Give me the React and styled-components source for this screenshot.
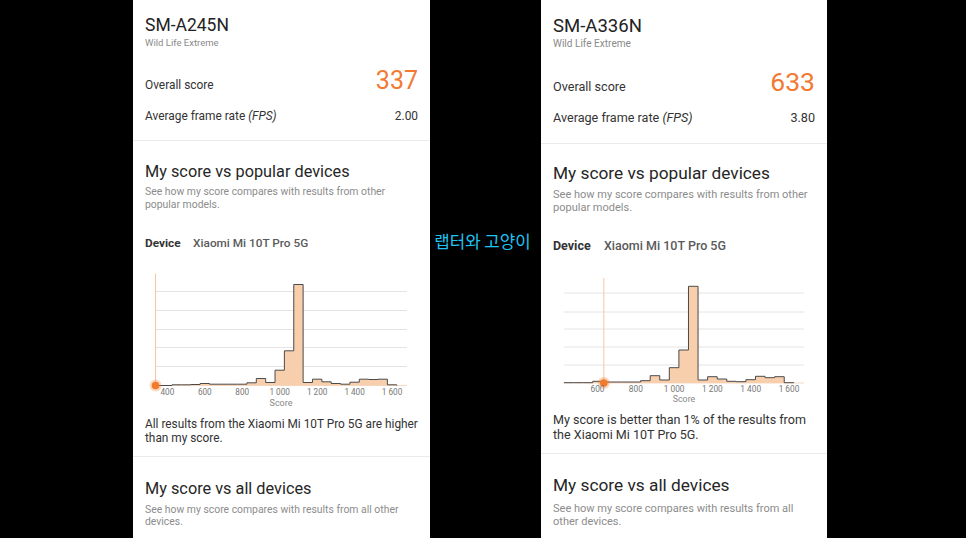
import styled, { createGlobalStyle } from "styled-components";

const GlobalStyle = createGlobalStyle`
    html, body {
        margin: 0;
        padding: 0;
        background: #000;
    }
    body {
        font-family: Roboto, "Noto Sans", sans-serif;
    }
`;

const Page = styled.div`
    display: flex;
    height: 538px;
    overflow: hidden;
    padding-left: 133px;
    background: #000;
`;

// --s scales the text of one screenshot against the other
const Panel = styled.div`
    --s: ${(p) => p.$s};
    flex-shrink: 0;
    width: ${(p) => p.$w}px;
    height: 538px;
    overflow: hidden;
    background: #fff;
    color: #222;
`;

const Middle = styled.div`
    flex-shrink: 0;
    width: 111px;
    padding: 231px 6px 0 0;
    box-sizing: border-box;
    text-align: center;
    white-space: nowrap;
    color: #20c4f4;
    font-family: "Noto Sans CJK KR", sans-serif;
    font-size: 16.8px;
    line-height: 20px;
`;

const Section = styled.section`
    padding: ${(p) => p.$top}px 12px ${(p) => p.$bottom}px;
    border-bottom: 1px solid #ebebeb;
`;

const Title = styled.div`
    font-size: calc(17.5px * var(--s));
    line-height: calc(21px * var(--s));
    color: #222;
`;

const Caption = styled.div`
    margin-top: 1px;
    font-size: calc(9.5px * var(--s));
    line-height: calc(12px * var(--s));
    color: #8a8a8a;
`;

const ValueRow = styled.div`
    display: flex;
    justify-content: space-between;
    align-items: baseline;
    margin-top: ${(p) => p.$top}px;
    font-size: calc(11.9px * var(--s));
    line-height: calc(16px * var(--s));
    color: #333;
    em {
        font-style: italic;
    }
`;

const BigScore = styled.span`
    font-size: calc(25px * var(--s));
    line-height: calc(28px * var(--s));
    color: #f27a33;
`;

const Heading = styled.div`
    font-size: calc(16.3px * var(--s));
    line-height: calc(19px * var(--s));
    color: #262626;
`;

const Sub = styled.div`
    margin-top: ${(p) => p.$top ?? 5}px;
    font-size: calc(10.4px * var(--s));
    line-height: calc(12.5px * var(--s));
    color: #8c8c8c;
`;

const DeviceLine = styled.div`
    display: flex;
    gap: calc(12.5px * var(--s));
    margin-top: 25px;
    font-size: calc(11.8px * var(--s));
    line-height: 14px;
    font-weight: 500;
    color: #5a5a5a;
    b {
        font-weight: 700;
        color: #333;
    }
`;

const ChartBox = styled.svg`
    display: block;
    margin-top: 15px;
    overflow: visible;
    font-family: Roboto, sans-serif;
`;

const Result = styled.div`
    margin-top: 8px;
    font-size: calc(11.85px * var(--s));
    line-height: calc(14px * var(--s));
    color: #333;
`;

function Histogram({ c, bins, myScore, width }) {
    const x = (s) => c.left + ((s - c.min) / 200) * c.px200;
    const barW = (50 / 200) * c.px200;
    const base = c.base;
    let top = `M ${c.left} ${base} L ${x(425)} ${base}`;
    bins.forEach((h, i) => {
        const x0 = x(425 + i * 50);
        top += ` L ${x0} ${base - h} L ${x0 + barW} ${base - h}`;
    });
    const end = x(425 + bins.length * 50);
    top += ` L ${end} ${base}`;
    const labels = [400, 600, 800, 1000, 1200, 1400, 1600].filter((s) => x(s) >= c.left + 4);
    const mx = x(myScore);

    return (
        <ChartBox width={width} height={base + c.foot}>
            {c.grid.map((g) => (
                <line key={g} x1={c.left} x2={c.right} y1={base - g} y2={base - g} stroke="#e4e4e4" strokeWidth="1" />
            ))}
            <line x1={c.left} x2={c.right} y1={base} y2={base} stroke="#f5d9c6" strokeWidth="1" />
            <path d={top + " Z"} fill="#f8cfad" />
            <path d={top} fill="none" stroke="#4a4a4a" strokeWidth="1" />
            <line x1={mx} x2={mx} y1={base - c.mark} y2={base} stroke="#f7c4a3" strokeWidth="1" />
            <circle cx={mx} cy={base} r="6" fill="#f27a2b" opacity="0.3" />
            <circle cx={mx} cy={base} r="3.8" fill="#f27a2b" />
            {labels.map((s) => (
                <text key={s} x={x(s)} y={base + c.labelY} textAnchor="middle" fontSize={c.fs} fill="#777">
                    {s >= 1000 ? `1 ${String(s).slice(1)}` : s}
                </text>
            ))}
            <text x={(c.left + c.right) / 2} y={base + c.scoreY} textAnchor="middle" fontSize={c.scoreFs} fill="#888">
                Score
            </text>
        </ChartBox>
    );
}

const leftBins = [0.7, 0.7, 1, 2, 1.3, 1.3, 1.3, 1.3, 2.7, 7, 3, 15.3, 34.7, 101, 3, 6.3, 3.7, 2, 1.3, 3.3, 6.3, 6, 6.3, 0.7];
const rightBins = [0.3, 0.3, 0.3, 1.7, 1, 1, 1, 1, 2.3, 7.3, 3, 15.3, 33, 96.7, 3, 6.3, 4, 1.7, 1.3, 3.3, 6.7, 5.3, 6.3, 0.3];

const panels = [
    {
        w: 297,
        s: 1,
        model: "SM-A245N",
        score: 337,
        fps: "2.00",
        space: { top: 15, gap: 18, headBottom: 16, secTop: 21, secBottom: 11, allTop: 22 },
        bins: leftBins,
        chart: {
            base: 120.5,
            foot: 23,
            left: 10,
            right: 262,
            min: 334,
            px200: 37.45,
            mark: 112,
            grid: [94, 75, 56, 38, 19],
            labelY: 9,
            scoreY: 20,
            fs: 8.2,
            scoreFs: 9,
        },
        result: "All results from the Xiaomi Mi 10T Pro 5G are higher than my score.",
        allSub: "See how my score compares with results from all other devices.",
    },
    {
        w: 286,
        s: 1.06,
        model: "SM-A336N",
        score: 633,
        fps: "3.80",
        space: { top: 15, gap: 16, headBottom: 16, secTop: 19, secBottom: 10, allTop: 21.5 },
        bins: rightBins,
        chart: {
            base: 115,
            foot: 22,
            left: 11,
            right: 251,
            min: 425,
            px200: 38.3,
            mark: 105,
            grid: [90, 71, 54, 36, 18],
            labelY: 8.8,
            scoreY: 19,
            fs: 8.3,
            scoreFs: 8.8,
        },
        result: "My score is better than 1% of the results from the Xiaomi Mi 10T Pro 5G.",
        allSub: "See how my score compares with results from all other devices.",
    },
];

function ScorePanel({ p }) {
    const sp = p.space;
    return (
        <Panel $w={p.w} $s={p.s}>
            <Section $top={sp.top} $bottom={sp.headBottom}>
                <Title>{p.model}</Title>
                <Caption>Wild Life Extreme</Caption>
                <ValueRow $top={sp.gap}>
                    <span>Overall score</span>
                    <BigScore>{p.score}</BigScore>
                </ValueRow>
                <ValueRow $top={13}>
                    <span>
                        Average frame rate <em>(FPS)</em>
                    </span>
                    <span>{p.fps}</span>
                </ValueRow>
            </Section>
            <Section $top={sp.secTop} $bottom={sp.secBottom}>
                <Heading>My score vs popular devices</Heading>
                <Sub>See how my score compares with results from other popular models.</Sub>
                <DeviceLine>
                    <b>Device</b>
                    <span>Xiaomi Mi 10T Pro 5G</span>
                </DeviceLine>
                <Histogram c={p.chart} bins={p.bins} myScore={p.score} width={p.w - 24} />
                <Result>{p.result}</Result>
            </Section>
            <Section $top={sp.allTop} $bottom={sp.secBottom}>
                <Heading>My score vs all devices</Heading>
                <Sub $top={6}>{p.allSub}</Sub>
            </Section>
        </Panel>
    );
}

export default function App() {
    return (
        <>
            <GlobalStyle />
            <Page>
                <ScorePanel p={panels[0]} />
                <Middle>랩터와 고양이</Middle>
                <ScorePanel p={panels[1]} />
            </Page>
        </>
    );
}
